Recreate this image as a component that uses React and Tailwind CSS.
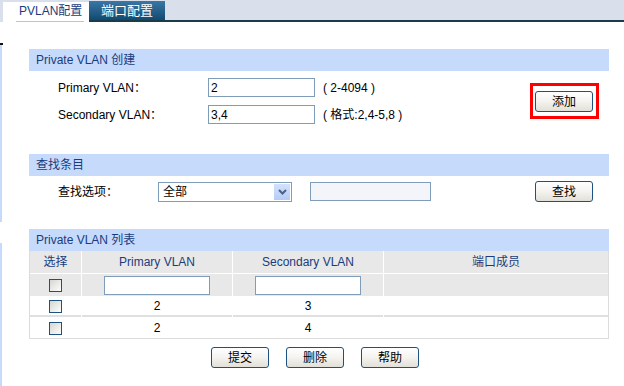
import React from "react";

const font = "font-['Liberation_Sans','Noto_Sans_CJK_SC',sans-serif]";

function Btn({ children }) {
  return (
    <button className="w-[58px] h-[21px] border border-[#1c5180] rounded-[3px] bg-linear-to-b from-white via-[#f4f3ef] to-[#e2e0d8] text-[12px] text-black leading-none">
      {children}
    </button>
  );
}

function Check() {
  return (
    <div className="w-[13px] h-[13px] border border-[#1c5180] bg-linear-to-br from-[#d6d6d0] to-[#fdfdfd]" />
  );
}

function SectionHead({ children }) {
  return (
    <div className="h-[22px] bg-[#c6dafc] pl-[7px] flex items-center text-[12px] text-[#1a3c7c]">
      {children}
    </div>
  );
}

export default function App() {
  const rows = [
    { p: "2", s: "3" },
    { p: "2", s: "4" },
  ];

  return (
    <div className={`w-[624px] h-[386px] bg-white overflow-hidden flex flex-col ${font}`}>
      {/* tab bar */}
      <div className="h-[22px] flex bg-[#d9e0eb] shrink-0">
        <div className="w-[3px]" />
        <div className="w-[86px] mt-[2px] bg-white flex flex-col items-start pl-[13px]">
          <span className="whitespace-nowrap text-[12px] text-[#1a3c7c] leading-[19px] pl-[3px] pr-[2px] border-b border-[#c0c4c8]">
            PVLAN配置
          </span>
        </div>
        <div className="w-[76px] mt-[1px] bg-linear-to-b from-[#3a77a6] to-[#114a70] border-b-2 border-[#1b3b4b] flex items-center justify-center text-[13px] text-white">
          端口配置
        </div>
        <div className="flex-1 border-b-2 border-[#1b3b4b]" />
      </div>

      {/* body */}
      <div className="flex flex-1">
        <div className="w-[3px] flex flex-col">
          <div className="h-[21px]" />
          <div className="h-[2px] bg-[#111]" />
          <div className="h-[177px] bg-[#c6dafc] w-[2px]" />
          <div className="h-[21px]" />
          <div className="flex-1 bg-[#c6dafc] w-[2px]" />
        </div>

        <div className="ml-[26px] w-[580px] flex flex-col">
          {/* create */}
          <div className="mt-[27px]">
            <SectionHead>Private VLAN 创建</SectionHead>
            <div className="flex items-center mt-[7px]">
              <div className="flex flex-col gap-[8px] pl-[29px]">
                <div className="flex items-center h-[19px] text-[12px]">
                  <span className="w-[150px]">Primary VLAN：</span>
                  <input
                    defaultValue="2"
                    className="w-[107px] h-[19px] border border-[#7f9db9] px-[2px] text-[12px] outline-none"
                  />
                  <span className="ml-[8px]">( 2-4094 )</span>
                </div>
                <div className="flex items-center h-[19px] text-[12px]">
                  <span className="w-[150px]">Secondary VLAN：</span>
                  <input
                    defaultValue="3,4"
                    className="w-[107px] h-[19px] border border-[#7f9db9] px-[2px] text-[12px] outline-none"
                  />
                  <span className="ml-[8px]">( 格式:2,4-5,8 )</span>
                </div>
              </div>
              <div className="ml-auto mr-[10px] border-[3px] border-[#ff0000] w-[69px] h-[36px] flex pl-[2px] pt-[5px]">
                <Btn>添加</Btn>
              </div>
            </div>
          </div>

          {/* search */}
          <div className="mt-[30px]">
            <SectionHead>查找条目</SectionHead>
            <div className="flex items-center mt-[5px] h-[21px] text-[12px]">
              <span className="pl-[29px] w-[129px]">查找选项：</span>
              <div className="w-[134px] h-[20px] border border-[#7f9db9] flex items-center pl-[4px]">
                <span className="flex-1">全部</span>
                <div className="w-[16px] h-[16px] mr-[1px] bg-linear-to-b from-[#d3e1fd] to-[#b5cbf7] flex items-center justify-center">
                  <svg width="9" height="6" viewBox="0 0 9 6">
                    <path d="M1 1 L4.5 4.5 L8 1" stroke="#4d6185" strokeWidth="2" fill="none" />
                  </svg>
                </div>
              </div>
              <input className="ml-[18px] w-[121px] h-[19px] border border-[#7f9db9] bg-[#f3f5fa] outline-none" />
              <div className="ml-auto mr-[16px]">
                <Btn>查找</Btn>
              </div>
            </div>
          </div>

          {/* list */}
          <div className="mt-[27px]">
            <SectionHead>Private VLAN 列表</SectionHead>
            <div className="border-x border-b border-[#dcdcdc] text-[12px]">
              <div className="grid grid-cols-[51px_150px_150px_1fr] gap-x-[1px] gap-y-[1px] bg-white">
                <div className="h-[22px] bg-[#e8e8e8] flex items-center justify-center text-[#1a3c7c]">选择</div>
                <div className="h-[22px] bg-[#e8e8e8] flex items-center justify-center text-[#1a3c7c]">Primary VLAN</div>
                <div className="h-[22px] bg-[#e8e8e8] flex items-center justify-center text-[#1a3c7c]">Secondary VLAN</div>
                <div className="h-[22px] bg-[#e8e8e8] flex items-center justify-center text-[#1a3c7c]">端口成员</div>
                <div className="h-[22px] bg-[#e8e8e8] flex items-center justify-center"><Check /></div>
                <div className="h-[22px] bg-[#e8e8e8] flex items-center justify-center">
                  <input className="w-[106px] h-[19px] border border-[#7f9db9] bg-white outline-none" />
                </div>
                <div className="h-[22px] bg-[#e8e8e8] flex items-center justify-center">
                  <input className="w-[106px] h-[19px] border border-[#7f9db9] bg-white outline-none" />
                </div>
                <div className="h-[22px] bg-[#e8e8e8]" />
              </div>
              {rows.map((r, i) => (
                <div key={i} className="grid grid-cols-[51px_150px_150px_1fr] gap-x-[1px] mt-[1px]">
                  <div className={`h-[20px] flex items-center justify-center ${i === 0 ? "border-b-2 border-[#e0e0e0]" : ""}`}><Check /></div>
                  <div className={`h-[20px] flex items-center justify-center ${i === 0 ? "border-b-2 border-[#e0e0e0]" : ""}`}>{r.p}</div>
                  <div className={`h-[20px] flex items-center justify-center ${i === 0 ? "border-b-2 border-[#e0e0e0]" : ""}`}>{r.s}</div>
                  <div className={`h-[20px] ${i === 0 ? "border-b-2 border-[#e0e0e0]" : ""}`} />
                </div>
              ))}
            </div>
            <div className="flex justify-center gap-[17px] mt-[8px] pr-[8px]">
              <Btn>提交</Btn>
              <Btn>删除</Btn>
              <Btn>帮助</Btn>
            </div>
          </div>
        </div>
      </div>
    </div>
  );
}
